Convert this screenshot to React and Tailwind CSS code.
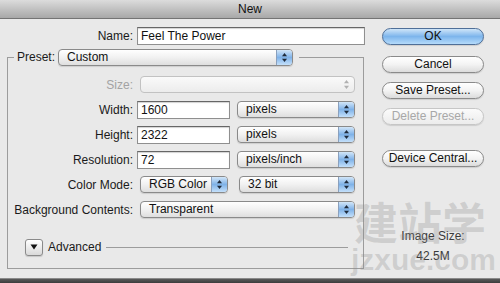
import React from "react";

function Arrows({ disabled }) {
  const c = disabled ? "#b0b0b0" : "#1e2a3a";
  return (
    <svg width="7" height="11" viewBox="0 0 7 11">
      <path d="M3.5 1 L6 4.2 L1 4.2 Z" fill={c} />
      <path d="M3.5 10 L6 6.8 L1 6.8 Z" fill={c} />
    </svg>
  );
}

function Popup({ w, text, disabled }) {
  return (
    <div
      className={`flex h-[17px] ${w} overflow-hidden rounded-[4px] border ${
        disabled
          ? "border-[#c2c2c2] bg-gradient-to-b from-[#fafafa] to-[#ececec]"
          : "border-[#8a8a8a] bg-gradient-to-b from-white via-[#f1f1f1] to-[#dedede] shadow-[0_1px_1px_rgba(0,0,0,0.12)]"
      }`}
    >
      <div className="flex-1 pl-[8px] text-[12px] leading-[15px] text-[#111]">{text}</div>
      {disabled ? (
        <div className="flex w-[16px] items-center justify-center">
          <Arrows disabled />
        </div>
      ) : (
        <div className="flex w-[16px] items-center justify-center border-l border-[#8aa0bd] bg-gradient-to-b from-[#d2e6f8] via-[#7fb2e8] to-[#c4e0fa]">
          <Arrows />
        </div>
      )}
    </div>
  );
}

function Field({ w, text }) {
  return (
    <div
      className={`h-[18px] ${w} border border-[#8f8f8f] border-t-[#666] bg-white pl-[3px] text-[12px] leading-[16px] text-[#111] shadow-[inset_0_1px_1px_rgba(0,0,0,0.18)]`}
    >
      {text}
    </div>
  );
}

function Btn({ children, kind }) {
  const cls =
    kind === "ok"
      ? "border-[#4f6f98] bg-gradient-to-b from-[#cfe5f8] via-[#7db5ec] to-[#b5dbfb] text-[#111]"
      : kind === "disabled"
      ? "border-[#c6c6c6] bg-gradient-to-b from-[#fbfbfb] to-[#ececec] text-[#a8a8a8]"
      : "border-[#8a8a8a] bg-gradient-to-b from-white via-[#f3f3f3] to-[#dcdcdc] text-[#111]";
  return (
    <div
      className={`h-[17px] w-[102px] rounded-full border text-center text-[12px] leading-[15px] shadow-[0_1px_1px_rgba(0,0,0,0.12)] ${cls}`}
    >
      {children}
    </div>
  );
}

function Row({ label, gray, children }) {
  return (
    <div className="flex h-[25px] items-center">
      <div className={`w-[125px] text-right ${gray ? "text-[#a3a3a3]" : "text-[#1a1a1a]"}`}>{label}</div>
      {children}
    </div>
  );
}

export default function App() {
  return (
    <div className="flex h-[283px] w-[500px] flex-col overflow-hidden bg-[#e9e9e9] font-['Liberation_Sans',Arial,sans-serif] text-[12px] text-[#1a1a1a]">
      <div className="flex h-[19px] items-center justify-center border-b border-[#747474] bg-gradient-to-b from-[#dcdcdc] to-[#a8a8a8] text-[12px] text-[#111]">
        New
      </div>
      <div className="relative flex flex-1">
        <div className="w-[366px] pt-[8px]">
          <div className="flex h-[18px] items-center">
            <div className="w-[133px] text-right">Name:</div>
            <div className="ml-[4px]">
              <Field w="w-[228px]" text="Feel The Power" />
            </div>
          </div>
          <fieldset className="ml-[7px] mt-[3px] h-[221px] w-[357px] border border-[#9c9c9c] p-0">
            <legend className="ml-[6px] flex items-center pl-[3px] pr-[6px]">
              <span>Preset:</span>
              <div className="ml-[3px]">
                <Popup w="w-[235px]" text="Custom" />
              </div>
            </legend>
            <div className="mt-[6px] flex flex-col">
              <Row label="Size:" gray>
                <div className="ml-[7px]">
                  <Popup w="w-[215px]" text="" disabled />
                </div>
              </Row>
              <Row label="Width:">
                <div className="ml-[4px]">
                  <Field w="w-[93px]" text="1600" />
                </div>
                <div className="ml-[7px]">
                  <Popup w="w-[118px]" text="pixels" />
                </div>
              </Row>
              <Row label="Height:">
                <div className="ml-[4px]">
                  <Field w="w-[93px]" text="2322" />
                </div>
                <div className="ml-[7px]">
                  <Popup w="w-[118px]" text="pixels" />
                </div>
              </Row>
              <Row label="Resolution:">
                <div className="ml-[4px]">
                  <Field w="w-[93px]" text="72" />
                </div>
                <div className="ml-[7px]">
                  <Popup w="w-[118px]" text="pixels/inch" />
                </div>
              </Row>
              <Row label="Color Mode:">
                <div className="ml-[7px]">
                  <Popup w="w-[88px]" text="RGB Color" />
                </div>
                <div className="ml-[11px]">
                  <Popup w="w-[116px]" text="32 bit" />
                </div>
              </Row>
              <Row label="Background Contents:">
                <div className="ml-[7px]">
                  <Popup w="w-[215px]" text="Transparent" />
                </div>
              </Row>
              <div className="mt-[16px] flex items-center">
                <div className="ml-[17px] flex h-[17px] w-[18px] items-center justify-center rounded-[3px] border border-[#8a8a8a] bg-gradient-to-b from-white to-[#d9d9d9] shadow-[0_1px_1px_rgba(0,0,0,0.15)]">
                  <svg width="8" height="6" viewBox="0 0 8 6">
                    <path d="M0.5 0.5 L7.5 0.5 L4 5.5 Z" fill="#111" />
                  </svg>
                </div>
                <span className="ml-[5px]">Advanced</span>
                <div className="ml-[5px] mr-[15px] h-px flex-1 bg-[#9c9c9c]" />
              </div>
            </div>
          </fieldset>
        </div>
        <div className="flex flex-1 flex-col items-center pt-[9px]">
          <div className="flex flex-col gap-[9px]">
            <div className="mb-[2px]">
              <Btn kind="ok">OK</Btn>
            </div>
            <Btn>Cancel</Btn>
            <Btn>Save Preset...</Btn>
            <Btn kind="disabled">Delete Preset...</Btn>
            <div className="mt-[16px]">
              <Btn>Device Central...</Btn>
            </div>
          </div>
          <div className="mt-[62px] text-center leading-[14px] text-[#3a3a3a]">Image Size:</div>
          <div className="mt-[6px] text-center leading-[14px] text-[#3a3a3a]">42.5M</div>
        </div>
        <div className="pointer-events-none absolute left-[354px] top-[178px] flex flex-col items-start">
          <div className="font-['Noto_Sans_CJK_SC',sans-serif] text-[44px] font-bold leading-[48px] text-[rgba(140,140,140,0.28)]">
            建站学
          </div>
          <div className="-ml-[3px] font-['Liberation_Sans',sans-serif] text-[30px] font-bold leading-[30px] text-[rgba(140,140,140,0.28)]">
            jzxue.com
          </div>
        </div>
      </div>
      <div className="h-[5px] border-t border-[#8a8a8a] bg-gradient-to-b from-[#5a5a5a] to-[#3c3c3c]" />
    </div>
  );
}
